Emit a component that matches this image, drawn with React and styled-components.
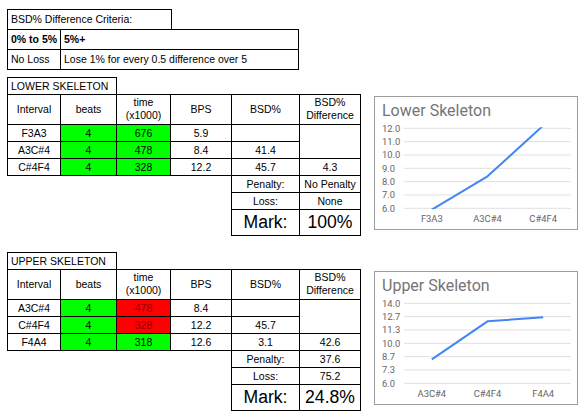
import styled, { createGlobalStyle } from 'styled-components';

const GlobalStyle = createGlobalStyle`
  body {
    margin: 0;
    background: #fff;
    font-family: 'Liberation Sans', Arial, sans-serif;
  }
`;

const Page = styled.div`
  display: flex;
  flex-direction: column;
  padding: 9px 0 0 7px;
`;

const Sheet = styled.table`
  border-collapse: collapse;
  table-layout: fixed;
  font-size: 10.5px;
  color: #000;
`;

const fills = {
  green: '#00ff00',
  red: '#ff0000',
};

const Cell = styled.td`
  border: ${(p) => (p.$blank ? 'none' : '1px solid #000')};
  background: ${(p) => fills[p.$fill] || 'transparent'};
  color: ${(p) => (p.$fill === 'red' ? '#8b0000' : '#000')};
  text-align: ${(p) => (p.$left ? 'left' : 'center')};
  vertical-align: ${(p) => p.$valign || 'bottom'};
  padding: 0 3px 1px;
  line-height: 13px;
  font-size: ${(p) => (p.$big ? '17.6px' : 'inherit')};
  font-weight: ${(p) => (p.$bold ? 700 : 400)};
  white-space: nowrap;
  overflow: hidden;
`;

const Row = styled.tr`
  height: ${(p) => p.$h}px;
`;

const Section = styled.div`
  display: flex;
  align-items: flex-start;
  gap: 13px;
  margin-top: ${(p) => p.$top}px;
`;

const ChartCard = styled.div`
  width: 202px;
  margin-top: 19px;
  border: 1px solid #9e9e9e;
  background: #fff;
`;

const ChartTitle = styled.div`
  padding: 5px 0 0 7px;
  font-family: Roboto, 'Liberation Sans', sans-serif;
  font-size: 16px;
  line-height: 18px;
  color: #757575;
`;

const Plot = styled.svg`
  display: block;
  font-family: Roboto, 'Liberation Sans', sans-serif;
  font-size: 9.4px;
`;

const Criteria = () => (
  <Sheet style={{ width: 291 }}>
    <colgroup>
      <col style={{ width: 53 }} />
      <col style={{ width: 111 }} />
      <col style={{ width: 127 }} />
    </colgroup>
    <tbody>
      <Row $h={20}>
        <Cell colSpan={2} $left $valign="middle">BSD% Difference Criteria:</Cell>
        <Cell $blank />
      </Row>
      <Row $h={20}>
        <Cell $left $bold $valign="middle">0% to 5%</Cell>
        <Cell colSpan={2} $left $bold $valign="middle">5%+</Cell>
      </Row>
      <Row $h={20}>
        <Cell $left $valign="middle">No Loss</Cell>
        <Cell colSpan={2} $left $valign="middle">Lose 1% for every 0.5 difference over 5</Cell>
      </Row>
    </tbody>
  </Sheet>
);

const colWidths = [53, 56, 54, 61, 68, 61];

const SkeletonTable = ({ title, rows, diff, penalty, loss, mark }) => (
  <Sheet style={{ width: 353 }}>
    <colgroup>
      {colWidths.map((w, i) => (
        <col key={i} style={{ width: w }} />
      ))}
    </colgroup>
    <tbody>
      <Row $h={17}>
        <Cell colSpan={2} $left>{title}</Cell>
        <Cell colSpan={4} $blank />
      </Row>
      <Row $h={30}>
        <Cell $valign="middle">Interval</Cell>
        <Cell $valign="middle">beats</Cell>
        <Cell $valign="middle">time<br />(x1000)</Cell>
        <Cell $valign="middle">BPS</Cell>
        <Cell $valign="middle">BSD%</Cell>
        <Cell $valign="middle">BSD%<br />Difference</Cell>
      </Row>
      {rows.map((r, i) => (
        <Row $h={17} key={r.interval}>
          <Cell>{r.interval}</Cell>
          <Cell $fill="green">4</Cell>
          <Cell $fill={r.late ? 'red' : 'green'}>{r.time}</Cell>
          <Cell>{r.bps}</Cell>
          <Cell>{r.bsd}</Cell>
          {i === 0 && <Cell rowSpan={2} />}
          {i === 2 && <Cell>{diff}</Cell>}
        </Row>
      ))}
      <Row $h={17}>
        <Cell colSpan={4} $blank />
        <Cell>Penalty:</Cell>
        <Cell>{penalty}</Cell>
      </Row>
      <Row $h={17}>
        <Cell colSpan={4} $blank />
        <Cell>Loss:</Cell>
        <Cell>{loss}</Cell>
      </Row>
      <Row $h={26}>
        <Cell colSpan={4} $blank />
        <Cell $big $valign="middle">Mark:</Cell>
        <Cell $big $valign="middle">{mark}</Cell>
      </Row>
    </tbody>
  </Sheet>
);

const PLOT_LEFT = 29;
const PLOT_RIGHT = 196;
const PLOT_TOP = 8.3;
const PLOT_H = 80;

const LineChart = ({ id, title, labels, values, ticks, min, max }) => {
  const step = (PLOT_RIGHT - PLOT_LEFT) / labels.length;
  const xAt = (i) => PLOT_LEFT + step * (i + 0.5);
  const yAt = (v) => PLOT_TOP + PLOT_H - ((v - min) / (max - min)) * PLOT_H;
  const points = values.map((v, i) => `${xAt(i)},${yAt(v)}`).join(' ');

  return (
    <ChartCard>
      <ChartTitle>{title}</ChartTitle>
      <Plot width="202" height="109" viewBox="0 0 202 109">
        <defs>
          <clipPath id={id}>
            <rect x={PLOT_LEFT} y={PLOT_TOP - 1} width={PLOT_RIGHT - PLOT_LEFT} height={PLOT_H + 2} />
          </clipPath>
        </defs>
        {ticks.map((t, i) => {
          const y = PLOT_TOP + (PLOT_H / (ticks.length - 1)) * i;
          return (
            <g key={t}>
              <line x1={PLOT_LEFT} x2={PLOT_RIGHT} y1={y} y2={y} stroke="#e0e0e0" strokeWidth="1" />
              <text x="7" y={y + 3.4} fill="#666">{t}</text>
            </g>
          );
        })}
        {labels.map((l, i) => (
          <text key={l} x={xAt(i)} y="102" textAnchor="middle" fill="#666">{l}</text>
        ))}
        <polyline
          points={points}
          fill="none"
          stroke="#4285f4"
          strokeWidth="2"
          strokeLinejoin="round"
          clipPath={`url(#${id})`}
        />
      </Plot>
    </ChartCard>
  );
};

const lowerRows = [
  { interval: 'F3A3', time: 676, bps: '5.9', bsd: '' },
  { interval: 'A3C#4', time: 478, bps: '8.4', bsd: '41.4' },
  { interval: 'C#4F4', time: 328, bps: '12.2', bsd: '45.7' },
];

const upperRows = [
  { interval: 'A3C#4', time: 478, bps: '8.4', bsd: '', late: true },
  { interval: 'C#4F4', time: 328, bps: '12.2', bsd: '45.7', late: true },
  { interval: 'F4A4', time: 318, bps: '12.6', bsd: '3.1' },
];

const App = () => (
  <>
    <GlobalStyle />
    <Page>
      <Criteria />
      <Section $top={7}>
        <SkeletonTable
          title="LOWER SKELETON"
          rows={lowerRows}
          diff="4.3"
          penalty="No Penalty"
          loss="None"
          mark="100%"
        />
        <LineChart
          id="lower-clip"
          title="Lower Skeleton"
          labels={['F3A3', 'A3C#4', 'C#4F4']}
          values={[5.9, 8.4, 12.2]}
          ticks={['12.0', '11.0', '10.0', '9.0', '8.0', '7.0', '6.0']}
          min={6}
          max={12}
        />
      </Section>
      <Section $top={16}>
        <SkeletonTable
          title="UPPER SKELETON"
          rows={upperRows}
          diff="42.6"
          penalty="37.6"
          loss="75.2"
          mark="24.8%"
        />
        <LineChart
          id="upper-clip"
          title="Upper Skeleton"
          labels={['A3C#4', 'C#4F4', 'F4A4']}
          values={[8.4, 12.2, 12.6]}
          ticks={['14.0', '12.7', '11.3', '10.0', '8.7', '7.3', '6.0']}
          min={6}
          max={14}
        />
      </Section>
    </Page>
  </>
);

export default App;
